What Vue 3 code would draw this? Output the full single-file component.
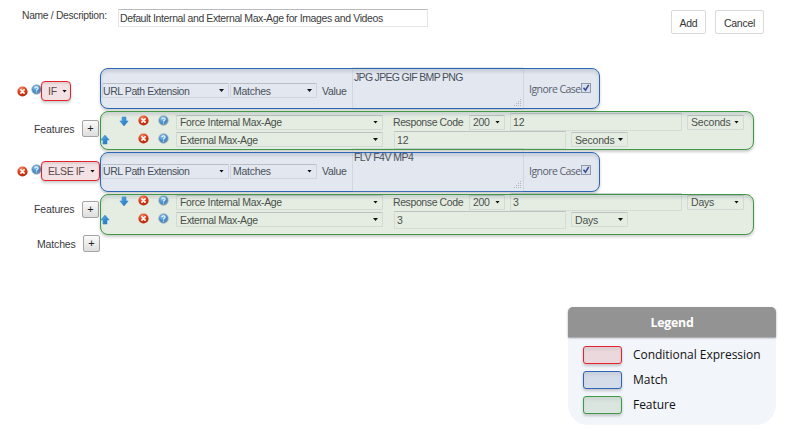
<script setup>
const rules = [
  {
    keyword: 'IF', cls: 'first', value: 'JPG JPEG GIF BMP PNG',
    features: [
      { name: 'Force Internal Max-Age', code: '200', value: '12', unit: 'Seconds' },
      { name: 'External Max-Age', value: '12', unit: 'Seconds' },
    ],
  },
  {
    keyword: 'ELSE IF', cls: 'second', value: 'FLV F4V MP4',
    features: [
      { name: 'Force Internal Max-Age', code: '200', value: '3', unit: 'Days' },
      { name: 'External Max-Age', value: '3', unit: 'Days' },
    ],
  },
]
const legend = [
  { kind: 'red', label: 'Conditional Expression' },
  { kind: 'blue', label: 'Match' },
  { kind: 'green', label: 'Feature' },
]
</script>

<template>
  <svg width="0" height="0" class="defs">
    <defs>
      <radialGradient id="gRed" cx=".4" cy=".25" r=".8">
        <stop offset="0" stop-color="#f58a62" /><stop offset=".5" stop-color="#dd3f1c" /><stop offset="1" stop-color="#a82608" />
      </radialGradient>
      <radialGradient id="gBlue" cx=".4" cy=".3" r=".75">
        <stop offset="0" stop-color="#8fc4ec" /><stop offset=".6" stop-color="#4189c6" /><stop offset="1" stop-color="#6f93ad" />
      </radialGradient>
      <linearGradient id="gArrow" x1="0" y1="0" x2="1" y2="1">
        <stop offset="0" stop-color="#5db4ee" /><stop offset="1" stop-color="#1767b4" />
      </linearGradient>
      <symbol id="del" viewBox="0 0 11 11">
        <circle cx="5.5" cy="5.5" r="5.1" fill="url(#gRed)" />
        <path d="M3.9 3.9l3.2 3.2M7.1 3.9L3.9 7.1" stroke="#fff" stroke-width="1.6" stroke-linecap="round" />
      </symbol>
      <symbol id="help" viewBox="0 0 11 11">
        <circle cx="5.5" cy="5.5" r="4.8" fill="url(#gBlue)" stroke="#a3b5bf" stroke-width=".7" />
        <path d="M3.8 4.2C3.9 2.4 7.1 2.4 7.1 4.2C7.1 5.3 5.6 5.2 5.5 6.5M5.5 7.6v1" fill="none" stroke="#e6f5ff" stroke-width="1.2" />
      </symbol>
      <symbol id="down" viewBox="0 0 10 11">
        <path d="M3 1h4v4h2.2L5 9.9.8 5H3z" fill="url(#gArrow)" stroke="#3d8aca" stroke-width=".6" />
      </symbol>
      <symbol id="up" viewBox="0 0 10 11">
        <path d="M3 10h4V6h2.2L5 1.1.8 6H3z" fill="url(#gArrow)" stroke="#3d8aca" stroke-width=".6" />
      </symbol>
    </defs>
  </svg>
  <main class="page">
    <header class="top">
      <label class="name-label">Name / Description:</label>
      <div class="name-input"><span>Default Internal and External Max-Age for Images and Videos</span></div>
      <button class="btn add">Add</button>
      <button class="btn cancel">Cancel</button>
    </header>

    <section v-for="r in rules" :key="r.keyword" class="rule" :class="r.cls">
      <div class="line match-line">
        <div class="side cond">
          <svg class="ic"><use href="#del" /></svg>
          <svg class="ic help"><use href="#help" /></svg>
          <div class="keyword"><span>{{ r.keyword }}</span><i class="caret"></i></div>
        </div>
        <div class="box blue match">
          <div class="select path"><span>URL Path Extension</span><i class="caret"></i></div>
          <div class="select op"><span>Matches</span><i class="caret"></i></div>
          <span class="value">Value</span>
          <div class="area">
            <span>{{ r.value }}</span>
            <svg class="grip" width="8" height="8" viewBox="0 0 8 8"><path d="M6 0h1v1H6zM4 2h1v1H4zM6 2h1v1H6zM2 4h1v1H2zM4 4h1v1H4zM6 4h1v1H6zM0 6h1v1H0zM2 6h1v1H2zM4 6h1v1H4zM6 6h1v1H6z" fill="#a5abb2" /></svg>
          </div>
          <span class="ignore">Ignore Case</span>
          <svg class="check" width="10" height="10" viewBox="0 0 10 10"><rect x=".5" y=".5" width="9" height="9" fill="#d8dfea" stroke="#919aa7" /><path d="M2.5 4.8l2 2.4L7.7 1.8" fill="none" stroke="#354a91" stroke-width="1.5" /></svg>
        </div>
      </div>
      <div class="line feature-line">
        <div class="side"><span class="side-label">Features</span><button class="plus">+</button></div>
        <div class="box green features">
          <div v-for="(f, i) in r.features" :key="i" class="feature" :class="i ? 'last' : 'lead'">
            <svg class="arrow"><use :href="i ? '#up' : '#down'" /></svg>
            <svg class="ic"><use href="#del" /></svg>
            <svg class="ic fhelp"><use href="#help" /></svg>
            <div class="select fname"><span>{{ f.name }}</span><i class="caret"></i></div>
            <template v-if="f.code">
              <span class="resp">Response Code</span>
              <div class="select code"><span>{{ f.code }}</span><i class="caret"></i></div>
            </template>
            <div class="input">{{ f.value }}</div>
            <div class="select unit"><span>{{ f.unit }}</span><i class="caret"></i></div>
          </div>
        </div>
      </div>
    </section>

    <div class="side matches"><span class="side-label">Matches</span><button class="plus">+</button></div>

    <aside class="legend">
      <h2>Legend</h2>
      <ul>
        <li v-for="l in legend" :key="l.kind"><i class="swatch" :class="l.kind"></i><span>{{ l.label }}</span></li>
      </ul>
    </aside>
  </main>
</template>

<style>
body { background: #fff; }
</style>

<style scoped>
* { box-sizing: border-box; }
.defs { position: absolute; }
.page { width: 789px; height: 437px; overflow: hidden; display: flex; flex-direction: column; font: 10.5px/14px "Liberation Sans", Arial, sans-serif; letter-spacing: -.28px; color: #3c3c3c; white-space: nowrap; }
.top { height: 68px; display: flex; align-items: flex-start; flex: none; }
.name-label { width: 96px; margin: 9px 0 0 22px; font-size: 10.3px; letter-spacing: -.3px; }
.name-input { width: 310px; height: 18px; border: 1px solid #e3e5e8; border-top-color: #b8babd; margin-top: 9px; padding: 0 1px; line-height: 17px; letter-spacing: -.39px; border-radius: 1px; }
.btn { height: 24px; margin-top: 10px; padding: 1px 0 0; border: 1px solid #d9d9d9; border-radius: 2px; background: #fff; font: 10.5px/22px "Liberation Sans", Arial, sans-serif; letter-spacing: -.25px; color: #333; }
.add { width: 35px; margin-left: 243px; }
.cancel { width: 49px; margin-left: 9px; }
.rule { display: flex; flex-direction: column; gap: 2px; margin-bottom: 2px; flex: none; }
.line { display: flex; }
.first .match-line { height: 41px; }
.first .feature-line { height: 39px; }
.second .match-line { height: 40px; }
.second .feature-line { height: 41px; }
.side { width: 100px; display: flex; align-items: center; flex: none; }
.ic { width: 11px; height: 11px; flex: none; }
.cond { padding: 5px 0 0 17px; }
.second .cond { padding: 0 0 2px 17px; }
.cond .help { margin: -4px 0 0 3px; }
.keyword { height: 20px; margin: 0 0 0 -1px; display: flex; align-items: center; justify-content: space-between; padding: 0 3px 0 6px; border: 1px solid #e5232d; border-radius: 4px; background: #f4e1e3; box-shadow: 0 2px 3px #0003, inset 0 2px 2px #8883; color: #5b4a4e; }
.first .keyword { width: 30px; padding-right: 2px; }
.second .keyword { width: 59px; letter-spacing: -.4px; }
.caret { width: 5px; height: 3px; margin-right: 1px; background: #111; clip-path: polygon(0 0, 100% 0, 50% 100%); flex: none; }
.box { border: 1px solid #2c66b4; border-radius: 8px; box-shadow: 0 2px 3px #0003, inset 0 3px 3px #88929f44; }
.blue { border-color: #2c66b4; background: #e2e7f0; }
.green { border-color: #409a45; background: #e5ede3; }
.match { width: 500px; display: flex; align-items: center; padding: 4px 0 0 1px; color: #4a505a; }
.second .match { padding: 0 0 2px 1px; }
.features { color: #4a504a; }
.select { height: 15px; display: flex; align-items: center; justify-content: space-between; border: 1px solid #8794a433; border-top-color: #7b869066; padding: 0 3px 0 3px; border-radius: 1px; flex: none; }
.path { width: 127px; padding-left: 0; letter-spacing: -.43px; }
.op { width: 87px; margin-left: 1px; padding-left: 2px; }
.value { width: 30px; margin-left: 5px; }
.area { width: 172px; height: 43px; border: 1px solid #8794a430; padding: 2px 1px 0; align-self: flex-end; display: flex; justify-content: space-between; margin-bottom: -2px; line-height: 15px; letter-spacing: -.68px; }
.second .area { height: 44px; margin-bottom: -3px; padding-top: 1px; letter-spacing: -.54px; }
.grip { align-self: flex-end; margin-bottom: 2px; opacity: .8; }
.ignore { width: 51px; margin-left: 5px; margin-top: -4px; font: 10.5px/14px "Open Sans", sans-serif; color: #59616d; letter-spacing: -.55px; }
.second .ignore { margin-top: -1px; }
.check { margin: -5px 0 0 1px; flex: none; }
.second .check { margin-top: -3px; }
.side-label { width: 48px; margin-left: 34px; letter-spacing: -.15px; }
.first .feature-line .side { height: 35px; }
.second .feature-line .side { height: 30px; }
.plus { width: 17px; height: 17px; padding: 0; border: 1px solid #a3a3a3; border-radius: 2px; background: linear-gradient(#fafafa, #dedede); font: 11px/13px "Liberation Sans", Arial, sans-serif; color: #222; }
.features { width: 654px; display: flex; flex-direction: column; padding-top: 1px; }
.feature { height: 18px; display: flex; align-items: center; flex: none; }
.second .features .lead { margin-top: -3px; }
.arrow { width: 10px; height: 11px; flex: none; margin-top: -2px; }
.lead .arrow { margin-left: 18px; margin-right: 9px; }
.last .arrow { margin-left: -1px; margin-right: 28px; }
.feature .ic { margin-top: -3px; }
.feature .fhelp { margin-left: 9px; }
.fname { width: 207px; margin-left: 7px; letter-spacing: -.36px; }
.resp { width: 76px; margin-left: 10px; letter-spacing: -.4px; }
.code { width: 36px; }
.input { width: 172px; height: 18px; border: 1px solid #8794a433; border-top-color: #7b869066; padding: 0 2px; line-height: 16px; margin-left: 5px; letter-spacing: -.2px; }
.last .input { margin-left: 11px; }
.unit { width: 57px; margin-left: 5px; letter-spacing: -.2px; }
.last .select { margin-top: -1px; }
.matches { height: 17px; margin-top: -2px; }
.matches .side-label { width: 46px; margin-left: 37px; }
.legend { width: 208px; height: 118px; margin: 55px 0 0 568px; border-radius: 6px 6px 20px 20px; background: #f2f5fa; flex: none; letter-spacing: -.03px; }
.legend h2 { height: 30px; margin: 0; border-radius: 5px 5px 0 0; background: #939393; box-shadow: 0 1px 2px #0006; color: #fff; font: bold 12.3px/31px "Open Sans", sans-serif; text-align: center; letter-spacing: -.2px; }
.legend ul { list-style: none; margin: 0; padding: 5px 0 0 15px; }
.legend li { height: 25px; display: flex; align-items: center; font: 12px/20px "Open Sans", sans-serif; color: #111; }
.swatch { width: 39px; height: 18px; margin-right: 11px; border: 1px solid #e5232d; border-radius: 3px; background: #ead8dd; box-shadow: 0 2px 3px #0003, inset 0 3px 3px #8882; }
.swatch.blue { border-color: #2c66b4; background: #d5dce9; }
.swatch.green { border-color: #409a45; background: #dae5df; }
</style>
